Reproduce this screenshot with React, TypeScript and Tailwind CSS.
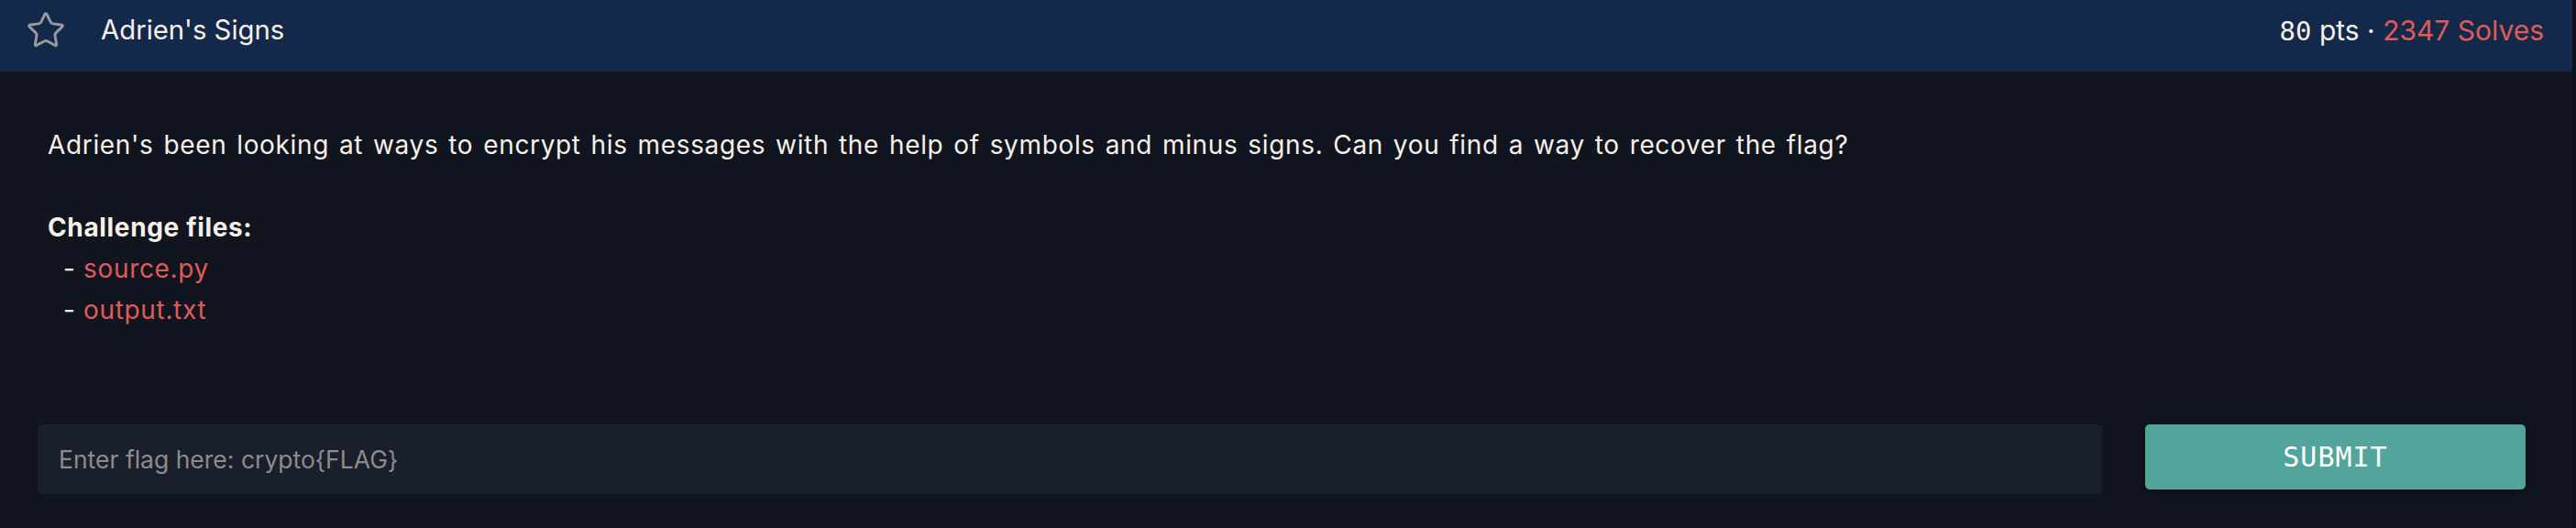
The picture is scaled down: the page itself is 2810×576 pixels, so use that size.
import React, { useState } from 'react';
import { Star } from 'lucide-react';

const files = ['source.py', 'output.txt'];

export default function App() {
  const [flag, setFlag] = useState('');

  return (
    <div className="flex h-[576px] w-full bg-[#0d111b] font-['Inter',sans-serif]">
      <div className="flex w-[2806px] flex-col bg-[#10151f]">
        {/* title bar */}
        <div className="h-[78px] bg-[#13294b] pb-[12px]">
          <div className="flex h-[66px] items-center pl-[28px] pr-[31px]">
            <Star size={44} strokeWidth={1.6} className="text-[#9a9a9a]" />
            <h2 className="ml-[38px] text-[29.3px] leading-none text-[#f7efe8]">Adrien's Signs</h2>
            <div className="ml-auto text-[30px] leading-none text-[#f7efe8]">
              <span className="font-['DejaVu_Sans_Mono',monospace] text-[29px]">80</span>
              <span> pts · </span>
              <span className="text-[#e05b58]">2347 Solves</span>
            </div>
          </div>
        </div>

        <div className="pl-[52px] pt-[58px] text-[28px] leading-[45px] tracking-[0.65px] text-[#f7efe8]">
          <p className="[word-spacing:2.4px]">
            Adrien's been looking at ways to encrypt his messages with the help of symbols and minus signs. Can you find a way to recover the flag?
          </p>
          <p className="mt-[45px] font-bold">Challenge files:</p>
          {files.map((f) => (
            <div key={f} className="whitespace-pre">
              {'  - '}
              <a href="#" className="text-[#e05b58]">{f}</a>
            </div>
          ))}
        </div>

        <form
          className="mt-[102px] flex items-start pl-[41px] pr-[51px]"
          onSubmit={(e) => e.preventDefault()}
        >
          <input
            value={flag}
            onChange={(e) => setFlag(e.target.value)}
            placeholder="Enter flag here: crypto{FLAG}"
            className="h-[76px] flex-1 rounded-[5px] bg-[#1a1f2c] px-[23px] text-[26.5px] text-[#f7efe8] placeholder:text-[#8f8b8b] focus:outline-none"
          />
          <button
            type="submit"
            className="ml-[47px] h-[71px] w-[415px] rounded-[5px] bg-[#52a59a] font-['DejaVu_Sans_Mono',monospace] text-[30px] tracking-[1px] text-white shadow-[0_2px_8px_rgba(0,0,0,0.35)]"
          >
            SUBMIT
          </button>
        </form>
      </div>
    </div>
  );
}
